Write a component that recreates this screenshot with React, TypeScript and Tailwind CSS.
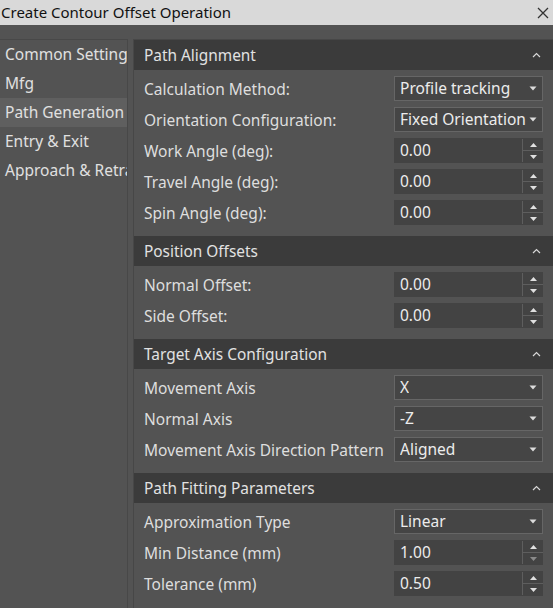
import React from "react";

const FONT = { fontFamily: '"Noto Sans", "Open Sans", sans-serif' };

function Chevron() {
  return (
    <svg width="9" height="6" viewBox="0 0 9 6" className="mr-[12px]">
      <polyline points="1,5 4.5,1.5 8,5" fill="none" stroke="#d8d8d8" strokeWidth="1.2" />
    </svg>
  );
}

function SectionHeader({ title }: { title: string }) {
  return (
    <div className="h-[30px] bg-[#3b3b3b] flex items-center justify-between pl-[10px] text-[15.4px] text-[#e2e2e2]">
      <span className="pt-[2px]">{title}</span>
      <Chevron />
    </div>
  );
}

function Dropdown({ value }: { value: string }) {
  return (
    <div className="w-[149px] h-[25px] bg-[#454545] border border-[#666666] flex items-center justify-between pl-[5px] pr-[5px] text-[15.5px] text-[#ececec]">
      <span className="whitespace-nowrap overflow-hidden pt-[1px]">{value}</span>
      <svg width="8" height="5" viewBox="0 0 8 5" className="shrink-0">
        <polygon points="0.5,0.5 7.5,0.5 4,4.5" fill="#dcdcdc" />
      </svg>
    </div>
  );
}

function Spin({ value, downDisabled }: { value: string; downDisabled?: boolean }) {
  return (
    <div className="w-[149px] h-[25px] bg-[#434343] flex items-stretch text-[15.5px] text-[#ececec]">
      <div className="flex-1 flex items-center pl-[6px] pt-[1px]">{value}</div>
      <div className="w-[21px] border-l border-[#5e5e5e] my-[1px] flex flex-col">
        <div className="flex-1 flex items-center justify-center border-b border-[#5e5e5e]">
          <svg width="7" height="4" viewBox="0 0 7 4">
            <polygon points="0,4 7,4 3.5,0" fill="#e0e0e0" />
          </svg>
        </div>
        <div className="flex-1 flex items-center justify-center">
          <svg width="7" height="4" viewBox="0 0 7 4">
            <polygon points="0,0 7,0 3.5,4" fill={downDisabled ? "#8a8a8a" : "#e0e0e0"} />
          </svg>
        </div>
      </div>
    </div>
  );
}

function Row({ label, children }: { label: string; children: React.ReactNode }) {
  return (
    <div className="h-[25px] flex items-center justify-between pl-[10px] pr-[10px]">
      <span className="text-[15.5px] text-[#dedede] whitespace-nowrap pt-[2px]">{label}</span>
      {children}
    </div>
  );
}

function Section({ title, children }: { title: string; children: React.ReactNode }) {
  return (
    <div>
      <SectionHeader title={title} />
      <div className="pt-[6px] pb-[11px] flex flex-col gap-[6px]">{children}</div>
    </div>
  );
}

export default function App() {
  const nav = ["Common Settings", "Mfg", "Path Generation", "Entry & Exit", "Approach & Retract"];
  return (
    <div className="w-[553px] h-[608px] overflow-hidden bg-[#535353] flex flex-col" style={FONT}>
      <div className="h-[25px] bg-[#d9d9d9] flex items-center justify-between shrink-0">
        <span className="text-[15px] text-[#111111] pl-[1px] leading-none">Create Contour Offset Operation</span>
        <svg width="12" height="12" viewBox="0 0 12 12" className="mr-[4px]">
          <path d="M1 1 L11 11 M11 1 L1 11" stroke="#333333" strokeWidth="1.3" />
        </svg>
      </div>
      <div className="flex-1 flex pt-[14px] min-h-0">
        <div className="w-[128px] shrink-0 border-t border-r border-[#484848] flex flex-col overflow-hidden">
          {nav.map((n) => (
            <div
              key={n}
              className={
                "h-[29px] flex items-center pl-[5px] pt-[1px] text-[15.5px] text-[#e0e0e0] whitespace-nowrap overflow-hidden " +
                (n === "Path Generation" ? "bg-[#5f5f5f]" : "")
              }
            >
              {n}
            </div>
          ))}
        </div>
        <div className="w-[5px] shrink-0" />
        <div className="flex-1 border-t border-l border-[#474747] overflow-hidden">
          <Section title="Path Alignment">
            <Row label="Calculation Method:">
              <Dropdown value="Profile tracking" />
            </Row>
            <Row label="Orientation Configuration:">
              <Dropdown value="Fixed Orientation" />
            </Row>
            <Row label="Work Angle (deg):">
              <Spin value="0.00" />
            </Row>
            <Row label="Travel Angle (deg):">
              <Spin value="0.00" />
            </Row>
            <Row label="Spin Angle (deg):">
              <Spin value="0.00" />
            </Row>
          </Section>
          <Section title="Position Offsets">
            <Row label="Normal Offset:">
              <Spin value="0.00" />
            </Row>
            <Row label="Side Offset:">
              <Spin value="0.00" />
            </Row>
          </Section>
          <Section title="Target Axis Configuration">
            <Row label="Movement Axis">
              <Dropdown value="X" />
            </Row>
            <Row label="Normal Axis">
              <Dropdown value="-Z" />
            </Row>
            <Row label="Movement Axis Direction Pattern">
              <Dropdown value="Aligned" />
            </Row>
          </Section>
          <Section title="Path Fitting Parameters">
            <Row label="Approximation Type">
              <Dropdown value="Linear" />
            </Row>
            <Row label="Min Distance (mm)">
              <Spin value="1.00" downDisabled />
            </Row>
            <Row label="Tolerance (mm)">
              <Spin value="0.50" />
            </Row>
          </Section>
        </div>
      </div>
    </div>
  );
}
